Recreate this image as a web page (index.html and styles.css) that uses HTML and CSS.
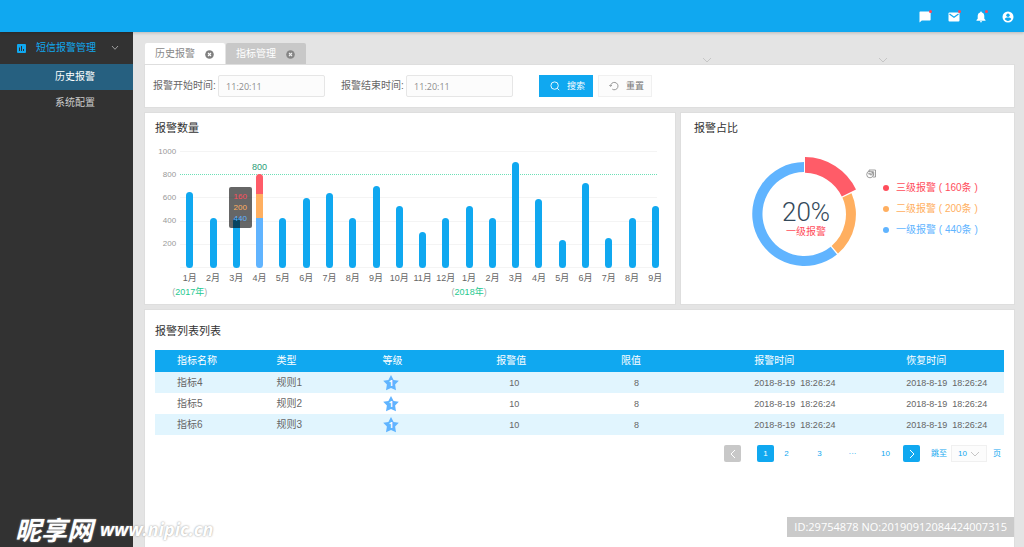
FILE: index.html
```
<!DOCTYPE html>
<html lang="zh-CN">
<head>
<meta charset="utf-8">
<title>历史报警</title>
<link rel="stylesheet" href="styles.css">
</head>
<body>
<header class="topbar">
  <button class="top-icon has-dot" aria-label="消息"><svg width="12" height="12" viewBox="0 0 12 12"><path fill="#fff" d="M1.200 .5h9.600a.8.8 0 0 1 .8.8v7.400a.8.8 0 0 1-.8.8H2.800L.5 11.600V1.300a.8.8 0 0 1 .7-.8z"/></svg></button>
  <button class="top-icon has-dot" aria-label="邮件"><svg width="12" height="12" viewBox="0 0 12 12"><rect x=".5" y="1.500" width="11" height="9" rx="1" fill="#fff"/><path d="M1.500 3 6 6.200 10.500 3" fill="none" stroke="#10a8f0" stroke-width="1.200"/></svg></button>
  <button class="top-icon has-dot" aria-label="通知"><svg width="12" height="12" viewBox="0 0 12 12"><path fill="#fff" d="M6 .5c.6 0 .9.4.9.9C8.600 1.900 9.300 3.300 9.300 5v2.800l1.200 1.200v.7h-9V9l1.200-1.200V5c0-1.700.7-3.100 2.400-3.600 0-.5.3-.9.900-.9zM4.900 10.300h2.200a1.100 1.100 0 0 1-2.200 0z"/></svg></button>
  <button class="top-icon" aria-label="账户"><svg width="12" height="12" viewBox="0 0 12 12"><circle cx="6" cy="6" r="5.500" fill="#fff"/><circle cx="6" cy="4.300" r="1.700" fill="#10a8f0"/><path d="M2.700 8.100C3.300 7 4.600 6.600 6 6.600s2.700.4 3.300 1.500C8.600 9.200 7.400 9.900 6 9.900s-2.600-.7-3.300-1.800z" fill="#10a8f0"/></svg></button>
</header>

<div class="shell">
  <nav class="sidebar">
    <button class="menu-head">
      <svg width="9" height="9" viewBox="0 0 9 9"><rect width="9" height="9" rx="1" fill="#10a8f0"/><path d="M2.500 3.500V7M4.500 2v5M6.500 5v2" stroke="#323232" stroke-width="1"/></svg>
      <span>短信报警管理</span>
      <svg class="menu-arrow" width="8" height="6" viewBox="0 0 8 6"><path d="M1 1l3 3.300L7 1" fill="none" stroke="#aaa" stroke-width=".9"/></svg>
    </button>
    <a class="menu-item active" href="#">历史报警</a>
    <a class="menu-item" href="#">系统配置</a>
  </nav>

  <main class="main">
    <div class="tabs">
      <div class="tab current"><a href="#">历史报警</a><button class="tab-close" aria-label="关闭历史报警"><svg width="9" height="9" viewBox="0 0 9 9"><circle cx="4.500" cy="4.500" r="4.300" fill="#808080"/><path d="M3 3l3 3M6 3L3 6" stroke="#fff" stroke-width="1.100"/></svg></button></div>
      <div class="tab"><a href="#">指标管理</a><button class="tab-close" aria-label="关闭指标管理"><svg width="9" height="9" viewBox="0 0 9 9"><circle cx="4.500" cy="4.500" r="4.300" fill="#858585"/><path d="M3 3l3 3M6 3L3 6" stroke="#eee" stroke-width="1.100"/></svg></button></div>
      <div class="tab-marks">
        <svg width="10" height="6" viewBox="0 0 10 6"><path d="M1 1l4 4 4-4" fill="none" stroke="#c6c6c6"/></svg>
        <svg width="10" height="6" viewBox="0 0 10 6"><path d="M1 1l4 4 4-4" fill="none" stroke="#c6c6c6"/></svg>
      </div>
    </div>

    <form class="panel search">
      <label for="start">报警开始时间:</label>
      <input id="start" type="text" value="11:20:11">
      <label class="second" for="end">报警结束时间:</label>
      <input id="end" type="text" value="11:20:11">
      <button class="btn primary" type="button"><svg width="10" height="10" viewBox="0 0 10 10"><circle cx="4.600" cy="4.600" r="3.700" fill="none" stroke="#fff" stroke-width=".9"/><path d="M7.300 7.300l1.900 1.900" stroke="#fff" stroke-width=".9"/></svg>搜索</button>
      <button class="btn" type="button"><svg width="10" height="10" viewBox="0 0 10 10"><path d="M1.600 5.200A3.700 3.700 0 1 1 3.300 8.200M.3 4.100l1.300 1.300 1.300-1.300" fill="none" stroke="#8c8c8c" stroke-width=".9"/></svg>重置</button>
    </form>

    <div class="charts">
      <section class="panel count">
        <h2>报警数量</h2>
        <div class="chart">
          <div class="axis"><span>1000</span><span>800</span><span>600</span><span>400</span><span>200</span><span></span></div>
          <div class="plot">
            <div class="lines"><i></i><i class="limit"></i><i></i><i></i><i></i><i></i></div>
            <div class="cols">
              <div class="col"><div class="bar" style="height:65%"></div></div>
              <div class="col"><div class="bar" style="height:43%"></div></div>
              <div class="col"><div class="bar" style="height:43%"></div><div class="tip"><span class="c3">160</span><span class="c2">200</span><span class="c1">440</span></div></div>
              <div class="col"><span class="total">800</span><div class="bar stacked" style="height:80%"><b class="b3" style="height:21%"></b><b class="b2" style="height:26%"></b><b class="b1" style="height:53%"></b></div></div>
              <div class="col"><div class="bar" style="height:43%"></div></div>
              <div class="col"><div class="bar" style="height:60%"></div></div>
              <div class="col"><div class="bar" style="height:64%"></div></div>
              <div class="col"><div class="bar" style="height:43%"></div></div>
              <div class="col"><div class="bar" style="height:70%"></div></div>
              <div class="col"><div class="bar" style="height:53%"></div></div>
              <div class="col"><div class="bar" style="height:31%"></div></div>
              <div class="col"><div class="bar" style="height:43%"></div></div>
              <div class="col"><div class="bar" style="height:53%"></div></div>
              <div class="col"><div class="bar" style="height:43%"></div></div>
              <div class="col"><div class="bar" style="height:91%"></div></div>
              <div class="col"><div class="bar" style="height:59%"></div></div>
              <div class="col"><div class="bar" style="height:24%"></div></div>
              <div class="col"><div class="bar" style="height:73%"></div></div>
              <div class="col"><div class="bar" style="height:26%"></div></div>
              <div class="col"><div class="bar" style="height:43%"></div></div>
              <div class="col"><div class="bar" style="height:53%"></div></div>
            </div>
          </div>
          <div class="months">
            <div>1月<span class="year">(<em>2017年</em>)</span></div><div>2月</div><div>3月</div><div>4月</div><div>5月</div><div>6月</div><div>7月</div><div>8月</div><div>9月</div><div>10月</div><div>11月</div><div>12月</div><div>1月<span class="year">(<em>2018年</em>)</span></div><div>2月</div><div>3月</div><div>4月</div><div>5月</div><div>6月</div><div>7月</div><div>8月</div><div>9月</div>
          </div>
        </div>
      </section>

      <section class="panel ratio">
        <h2>报警占比</h2>
        <div class="ratio-body">
          <svg class="donut" width="110" height="116" viewBox="0 0 110 116">
            <path fill="#ff5c68" d="M56 3A57 57 0 0 1 107 35.500L92.800 42.500A42 42 0 0 0 56 18.700z"/>
            <path fill="#ffaf60" d="M93.400 43.500L102.500 39.300A52 52 0 0 1 89 99.600L82.600 92A42 42 0 0 0 93.400 43.500z"/>
            <path fill="#60b4ff" d="M55 8A52 52 0 1 0 88 100.400L81.700 92.800A42 42 0 1 1 55 18z"/>
            <text class="percent" x="57" y="67">20%</text>
            <text class="percent-name" x="57" y="81">一级报警</text>
          </svg>
          <svg class="mark" width="10" height="10" viewBox="0 0 10 10"><g fill="none" stroke="#888" stroke-width=".8"><circle cx="4" cy="5.500" r="3.300"/><path d="M3 3V1h6.500v7H7M4 3.500v2.300h2v-3h1.700v4M2 4.800h2.500"/></g></svg>
          <ul class="legend">
            <li class="c3">三级报警 ( 160条 )</li>
            <li class="c2">二级报警 ( 200条 )</li>
            <li class="c1">一级报警 ( 440条 )</li>
          </ul>
        </div>
      </section>
    </div>

    <section class="panel list">
      <h2>报警列表列表</h2>
      <table>
        <colgroup><col class="w1"><col class="w2"><col class="w3"><col class="w4"><col class="w5"><col class="w6"><col></colgroup>
        <thead><tr><th>指标名称</th><th>类型</th><th>等级</th><th>报警值</th><th>限值</th><th>报警时间</th><th>恢复时间</th></tr></thead>
        <tbody>
          <tr><td>指标4</td><td>规则1</td><td><svg class="star" width="16" height="16" viewBox="0 0 16 16"><path fill="#60b4ff" d="M8 0l2.600 5 5.200.7-3.700 3.900.9 5.700L8 13l-5 2.300.9-5.700L.2 5.700 5.400 5z"/><text x="8" y="11">1</text></svg></td><td class="num">10</td><td class="num">8</td><td class="date">2018-8-19&nbsp; 18:26:24</td><td class="date">2018-8-19&nbsp; 18:26:24</td></tr>
          <tr><td>指标5</td><td>规则2</td><td><svg class="star" width="16" height="16" viewBox="0 0 16 16"><path fill="#60b4ff" d="M8 0l2.600 5 5.200.7-3.700 3.900.9 5.700L8 13l-5 2.300.9-5.700L.2 5.700 5.400 5z"/><text x="8" y="11">1</text></svg></td><td class="num">10</td><td class="num">8</td><td class="date">2018-8-19&nbsp; 18:26:24</td><td class="date">2018-8-19&nbsp; 18:26:24</td></tr>
          <tr><td>指标6</td><td>规则3</td><td><svg class="star" width="16" height="16" viewBox="0 0 16 16"><path fill="#60b4ff" d="M8 0l2.600 5 5.200.7-3.700 3.900.9 5.700L8 13l-5 2.300.9-5.700L.2 5.700 5.400 5z"/><text x="8" y="11">1</text></svg></td><td class="num">10</td><td class="num">8</td><td class="date">2018-8-19&nbsp; 18:26:24</td><td class="date">2018-8-19&nbsp; 18:26:24</td></tr>
        </tbody>
      </table>
      <div class="pager">
        <button class="page step off" aria-label="上一页"><svg width="8" height="10" viewBox="0 0 8 10"><path d="M6 1L2 5l4 4" fill="none" stroke="#fff"/></svg></button>
        <div class="pages">
          <button class="page on">1</button><button class="page two">2</button><button class="page">3</button><span class="page">···</span><button class="page">10</button>
        </div>
        <button class="page step on" aria-label="下一页"><svg width="8" height="10" viewBox="0 0 8 10"><path d="M2 1l4 4-4 4" fill="none" stroke="#fff"/></svg></button>
        <label for="jump">跳至</label>
        <span class="jump"><select id="jump"><option>10</option></select><svg width="10" height="6" viewBox="0 0 10 6"><path d="M1 1l4 4 4-4" fill="none" stroke="#c0c0c0" stroke-width=".9"/></svg></span>
        <span>页</span>
      </div>
    </section>
  </main>
</div>

<div class="site-mark"><span class="site-name">昵享网</span><span class="site-url">www.nipic.cn</span></div>
<div class="id-mark">ID:29754878 NO:20190912084424007315</div>
</body>
</html>
```
FILE: styles.css
```
* { box-sizing: border-box; }
body {
  margin: 0;
  min-height: 100vh;
  display: flex;
  flex-direction: column;
  position: relative;
  background: #e4e4e4;
  color: #666;
  font: 10px/14px "Liberation Sans", "Noto Sans CJK SC", sans-serif;
}
button, input, select { font: inherit; color: inherit; margin: 0; padding: 0; border: 0; background: none; }
a { color: inherit; text-decoration: none; }
svg { display: block; flex: none; }
h2 { margin: 0; font-size: 11px; line-height: 16px; font-weight: 400; color: #333; }

.topbar {
  height: 32px;
  padding: 1px 10px 0;
  display: flex;
  justify-content: flex-end;
  align-items: center;
  gap: 15px;
  background: #10a8f0;
  box-shadow: 0 1px 3px rgba(0, 0, 0, .2);
  z-index: 1;
}
.top-icon { position: relative; }
.top-icon:nth-child(1) { margin-right: 2px; }
.has-dot::after {
  content: "";
  position: absolute;
  top: -1px;
  right: -1px;
  width: 3px;
  height: 3px;
  border-radius: 50%;
  background: #ff4757;
}

.shell { flex: 1; display: flex; }
.sidebar { width: 13%; flex: none; background: #323232; color: #ccc; }
.menu-head {
  width: 100%;
  height: 32px;
  padding: 0 14px 0 17px;
  display: flex;
  align-items: center;
  gap: 10px;
  color: #10a8f0;
}
.menu-arrow { margin-left: auto; }
.menu-item { display: block; padding-left: 55px; line-height: 26px; }
.menu-item.active { background: #266080; color: #fff; }

.main { flex: 1; min-width: 0; padding: 11px 10px 0 12px; display: flex; flex-direction: column; }
.panel { background: #fff; box-shadow: 0 0 0 1px #dedede; }

.tabs { display: flex; gap: 1px; }
.tab {
  height: 22px;
  width: 80px;
  padding: 0 11px 0 10px;
  display: flex;
  align-items: center;
  justify-content: space-between;
  background: #c8c8c8;
  color: #fff;
  border-radius: 2px 2px 0 0;
}
.tab.current { background: #fff; color: #888; }
.tab-marks { flex: 1; display: flex; justify-content: flex-end; align-items: flex-end; gap: 166px; padding: 0 126px 2px 0; }

.search { display: flex; align-items: center; height: 42px; padding: 0 8px; }
.search label { width: 65px; flex: none; white-space: nowrap; }
.search .second { margin-left: 16px; }
.search input {
  width: 107px;
  height: 22px;
  padding: 0 7px;
  border: 1px solid #e6e6e6;
  border-radius: 2px;
  background: #fcfcfc;
  color: #8c8c8c;
  font-family: "Open Sans", sans-serif;
  font-size: 9px;
}
.btn {
  width: 54px;
  height: 22px;
  margin-left: 5px;
  padding-left: 3px;
  display: flex;
  align-items: center;
  justify-content: center;
  gap: 7px;
  border: 1px solid #f0f0f0;
  background: #fcfcfc;
  font-size: 9px;
  color: #777;
}
.btn.primary { margin-left: 26px; border-color: #10a8f0; background: #10a8f0; color: #fff; }

.charts { display: grid; grid-template-columns: 530fr 333fr; gap: 6px; margin: 6px 0; }
.charts .panel { height: 191px; }
.count { min-width: 0; padding: 7px 8px 0 10px; }
.ratio { min-width: 0; padding: 7px 12px 0 13px; }

.chart {
  display: grid;
  grid-template-columns: 23px 1fr;
  grid-template-rows: 117px auto;
  padding-top: 15px;
  font-size: 9px;
}
.axis { display: flex; flex-direction: column; justify-content: space-between; padding-right: 2px; color: #999; }
.axis span { height: 1px; display: flex; align-items: center; justify-content: flex-end; font-size: 8px; }
.plot { position: relative; }
.lines { position: absolute; inset: 0 10px 0 2px; display: flex; flex-direction: column; justify-content: space-between; }
.lines i { border-top: 1px solid #f4f4f4; }
.lines .limit { border-top: 1px dotted #6cdfb6; }
.cols { position: relative; height: 100%; display: flex; }
.col { flex: 1; display: flex; flex-direction: column; align-items: center; justify-content: flex-end; position: relative; }
.bar { width: 7px; border-radius: 4px; background: #10a8f0; }
.stacked { overflow: hidden; background: none; }
.stacked b { display: block; }
.b3 { background: #ff5c68; }
.b2 { background: #ffaf60; }
.b1 { background: #60b4ff; }
.total { line-height: 14px; color: #2a9d78; }
.tip {
  position: absolute;
  top: 36px;
  left: 4px;
  width: 23px;
  padding: 4px 0;
  border-radius: 2px;
  background: rgba(0, 0, 0, .6);
  display: flex;
  flex-direction: column;
  align-items: center;
  font-size: 8px;
  line-height: 11px;
  z-index: 1;
}
.c3 { color: #ff4d5b; }
.c2 { color: #ffaf60; }
.c1 { color: #60b4ff; }
.months { grid-column: 2; display: flex; padding-top: 3px; }
.months div { flex: 1 1 0; min-width: 0; display: flex; flex-direction: column; align-items: center; white-space: nowrap; }
.year { color: #aaa; }
.year em { font-style: normal; color: #25c98f; }

.ratio-body { display: flex; padding: 18px 0 0 55px; }
.percent { font: 300 26px Roboto, sans-serif; fill: #34495a; text-anchor: middle; }
.percent-name { font-size: 10px; fill: #ff4d5b; text-anchor: middle; }
.mark { margin: 15px 0 0 7px; }
.legend { margin: 23px 0 0 7px; padding: 0; list-style: none; line-height: 21px; white-space: nowrap; }
.legend li { display: flex; align-items: center; gap: 7px; }
.legend li::before { content: ""; width: 6px; height: 6px; border-radius: 50%; background: currentColor; }

.list { flex: 1; padding: 13px 10px 0; }
table { width: 100%; margin-top: 11px; border-collapse: collapse; table-layout: fixed; }
.w1 { width: 11.7%; }
.w2 { width: 12.5%; }
.w3 { width: 13.4%; }
.w4 { width: 14.7%; }
.w5 { width: 15.7%; }
.w6 { width: 17.9%; }
th, td { height: 21px; padding: 0 0 0 22px; text-align: left; font-weight: 400; white-space: nowrap; }
th { height: 22px; background: #10a8f0; color: #fff; }
tbody tr:nth-child(odd) { background: #e1f5fe; }
.num { padding-left: 35px; font-size: 9px; }
.date { font-size: 9px; }
.star text { font: 700 8px "Noto Sans", sans-serif; fill: #fff; text-anchor: middle; }

.pager { display: flex; justify-content: flex-end; align-items: center; padding: 10px 3px 0 0; font-size: 8px; color: #10a8f0; }
.page { min-width: 17px; height: 17px; display: flex; align-items: center; justify-content: center; border-radius: 2px; }
.page.on { background: #10a8f0; color: #fff; }
.page.off { background: #c8c8c8; }
.pages { display: flex; gap: 16px; margin: 0 9px 0 16px; }
.page.two { margin-left: -12px; }
.pager label { margin: 0 4px 0 11px; }
.jump { display: flex; align-items: center; margin-right: 6px; padding: 0 6px; width: 36px; height: 17px; border: 1px solid #f0f0f0; background: #fcfcfc; }
.jump select { appearance: none; width: 14px; }

.site-mark { position: absolute; left: 15px; bottom: 3px; display: flex; align-items: center; gap: 7px; color: #fff; font-style: italic; font-weight: 700; line-height: 30px; text-shadow: 0 0 2px #888; z-index: 2; }
.site-name { font-family: "Noto Sans CJK SC", sans-serif; font-size: 26px; }
.site-url { font-family: "Open Sans", sans-serif; font-size: 18px; }
.id-mark { position: absolute; right: 10px; bottom: 10px; padding: 0 7px; line-height: 20px; background: #cacaca; color: #fff; font-family: "Open Sans", sans-serif; font-size: 11px; z-index: 2; }
```
